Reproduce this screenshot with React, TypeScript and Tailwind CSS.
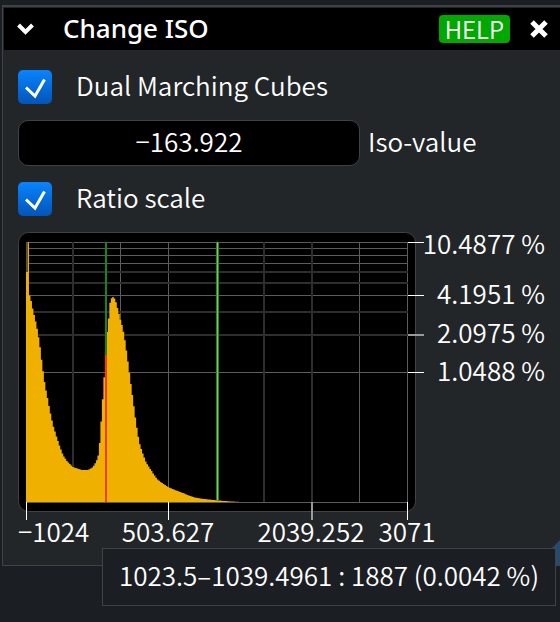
import React, { useId, useState } from 'react';

interface CheckRowProps {
    label: string;
}

interface Tick {
    pos: number;
    textPos: number;
    label: string;
    soft?: boolean;
    anchor?: 'start' | 'middle';
}

// Plot area inside the chart frame
const PLOT = { left: 8, top: 10, right: 389, bottom: 270 };
const BIN_COUNT = 256;

// Outline of the histogram, [x, y] in chart units
const OUTLINE: [number, number][] = [
    [8, 40], [9, 40], [9, 10], [10, 10], [11, 61], [13, 68], [15, 78], [18, 91], [20, 101], [22, 114],
    [24, 131], [27, 153], [30, 168], [32, 179], [35, 193], [39, 206], [42, 215], [45, 223], [49, 229],
    [52, 232], [55, 235], [58, 236], [64, 238], [70, 238], [75, 235], [78, 230], [80, 225], [81, 217],
    [82, 208], [83, 192], [84, 177], [85, 162], [86, 148], [87, 128], [89, 101], [91, 83], [92, 71],
    [94, 65], [96, 65], [98, 70], [100, 78], [102, 86], [104, 93], [106, 102], [108, 115], [110, 130],
    [112, 145], [114, 160], [116, 175], [118, 190], [120, 203], [122, 213], [125, 222], [128, 230],
    [131, 235], [135, 241], [139, 247], [144, 251], [150, 255], [157, 258], [165, 261], [172, 264],
    [179, 266], [187, 267], [196, 268], [206, 269], [223, 270], [389, 270],
];

const SHARP_ROWS = [10, 16, 23, 31, 63, 140, 270];
const SOFT_ROWS = [40, 51, 80, 103];
const SHARP_COLS = [102, 150, 341, 389];
const SOFT_COLS = [55, 246, 294];

const Y_TICKS: Tick[] = [
    { pos: 10, textPos: 22, label: '10.4877 %' },
    { pos: 63, textPos: 72, label: '4.1951 %' },
    { pos: 103, textPos: 111, label: '2.0975 %', soft: true },
    { pos: 140, textPos: 149, label: '1.0488 %' },
];

const X_TICKS: Tick[] = [
    { pos: 8, textPos: 0, label: '−1024', anchor: 'start' },
    { pos: 150, textPos: 150, label: '503.627', anchor: 'middle' },
    { pos: 294, textPos: 293, label: '2039.252', anchor: 'middle', soft: true },
    { pos: 389, textPos: 389, label: '3071', anchor: 'middle' },
];

const heightAt = (x: number) => {
    for (let i = 1; i < OUTLINE.length; i++) {
        const [x0, y0] = OUTLINE[i - 1];
        const [x1, y1] = OUTLINE[i];
        if (x <= x1 && x1 > x0) {
            return y0 + ((y1 - y0) * (x - x0)) / (x1 - x0);
        }
    }
    return PLOT.bottom;
};

const histogramPath = () => {
    const step = (PLOT.right - PLOT.left) / BIN_COUNT;
    let d = `M${PLOT.left} ${PLOT.bottom}`;
    for (let i = 0; i < BIN_COUNT; i++) {
        const x = PLOT.left + i * step;
        const y = i < 2 ? [40, 10][i] : heightAt(x + step / 2);
        d += `V${y.toFixed(1)}H${(x + step).toFixed(2)}`;
    }
    return `${d}V${PLOT.bottom}Z`;
};

const CheckRow: React.FC<CheckRowProps> = ({ label }) => {
    const id = useId();
    const [checked, setChecked] = useState(true);

    return (
        <div className="flex items-center gap-6">
            <span className="grid size-[34px]">
                <input
                    id={id}
                    type="checkbox"
                    checked={checked}
                    onChange={(e) => setChecked(e.target.checked)}
                    className="peer col-start-1 row-start-1 size-full appearance-none rounded-[5px] border border-[#3c4043] bg-black checked:border-0 checked:bg-linear-to-b checked:from-[#0a84ff] checked:to-[#0355b8]"
                />
                <svg
                    viewBox="0 0 34 34"
                    className="pointer-events-none invisible col-start-1 row-start-1 size-full peer-checked:visible"
                    fill="none"
                    stroke="#fff"
                    strokeWidth="3"
                >
                    <path d="M8 17.5 L17 26 L26.5 9.5" />
                </svg>
            </span>
            <label htmlFor={id} className="-mt-1">{label}</label>
        </div>
    );
};

const Histogram: React.FC = () => (
    <svg
        viewBox="0 0 542 317"
        width="542"
        height="317"
        className="block shrink-0 overflow-visible fill-white text-[26px]"
        role="img"
        aria-label="Histogram"
    >
        <rect x="0.5" y="0.5" width="397" height="279" rx="10" fill="#000" stroke="#3f4346" />

        {/* Grid */}
        <g fill="#5c5c5c" shapeRendering="crispEdges">
            {SHARP_ROWS.map((y) => (
                <rect key={y} x={PLOT.left} y={y} width="382" height="1" />
            ))}
            {SHARP_COLS.map((x) => (
                <rect key={x} x={x} y={PLOT.top} width="1" height="260" />
            ))}
        </g>
        <g fill="#2e2e2e" shapeRendering="crispEdges">
            {SOFT_ROWS.map((y) => (
                <rect key={y} x={PLOT.left} y={y - 1} width="382" height="2" />
            ))}
            {SOFT_COLS.map((x) => (
                <rect key={x} x={x - 1} y={PLOT.top} width="2" height="260" />
            ))}
        </g>

        <path d={histogramPath()} fill="#f0b000" />
        <rect x="8" y="10" width="2" height="30" fill="#6b5416" />

        {/* Current iso-value and hovered bin */}
        <rect x="87" y="10" width="2" height="113" fill="#14861f" />
        <rect x="87" y="123" width="2" height="147" fill="#f53a0c" />
        <rect x="198" y="10" width="3" height="258" fill="#2f7d26" />
        <rect x="199" y="10" width="1" height="258" fill="#74d05c" />

        {Y_TICKS.map(({ pos, textPos, label, soft }) => (
            <g key={label}>
                <rect x="390" y={soft ? pos - 1 : pos} width="16" height={soft ? 2 : 1} fill={soft ? '#999' : '#fff'} />
                <text x="527" y={textPos} textAnchor="end">{label}</text>
            </g>
        ))}
        {X_TICKS.map(({ pos, textPos, label, soft, anchor }) => (
            <g key={label}>
                <rect x={soft ? pos - 1 : pos} y="270" width={soft ? 2 : 1} height="18" fill={soft ? '#999' : '#fff'} />
                <text x={textPos} y="310" textAnchor={anchor}>{label}</text>
            </g>
        ))}
    </svg>
);

const App: React.FC = () => {
    const [isoValue, setIsoValue] = useState('−163.922');

    return (
        <div className="min-h-screen overflow-hidden bg-[#1b1e22] pt-[5px] pl-0.5 font-['Noto_Sans_CJK_SC',sans-serif] text-[26px] leading-8 font-[350] text-white">
            <section className="relative border-t-2 border-b border-l border-[#3f4347] bg-[#222628]">

                {/* Title bar */}
                <header className="ml-px mt-px flex h-[42px] items-center bg-black pr-[11px] pl-3">
                    <button type="button" aria-label="Collapse" className="mr-[27px] size-5">
                        <svg viewBox="0 0 20 20" className="size-5" fill="none" stroke="#fff" strokeWidth="4">
                            <path d="M2.5 6 L9.5 13 L16.5 6" strokeLinejoin="miter" />
                        </svg>
                    </button>
                    <h1 className="-mt-0.5 flex-1 font-['Noto_Sans',sans-serif] text-[26px] font-medium">Change ISO</h1>
                    <button type="button" className="flex h-7 items-center rounded-[4px] bg-[#00a800] px-1.5 text-2xl">
                        HELP
                    </button>
                    <button type="button" aria-label="Close" className="ml-[19px] size-5">
                        <svg viewBox="0 0 20 20" className="size-5" fill="none" stroke="#fff" strokeWidth="5">
                            <path d="M3 3 L17 17 M17 3 L3 17" />
                        </svg>
                    </button>
                </header>

                <div className="flex flex-col gap-4 pt-5 pb-4 pl-[15px]">
                    <CheckRow label="Dual Marching Cubes" />
                    <div className="flex items-center gap-2">
                        <input
                            id="iso-value"
                            type="text"
                            value={isoValue}
                            onChange={(e) => setIsoValue(e.target.value)}
                            className="h-[46px] w-[342px] rounded-[10px] border border-[#3f4346] bg-black pb-1.5 text-center"
                        />
                        <label htmlFor="iso-value" className="-mt-1">Iso-value</label>
                    </div>
                    <CheckRow label="Ratio scale" />
                    <Histogram />
                </div>

                {/* Resize grip */}
                <div className="absolute right-0 bottom-0 h-[25px] w-[25px] bg-[#294a6b] [clip-path:polygon(100%_0,100%_100%,0_100%)]" />

                <div role="tooltip" className="absolute right-1 -bottom-[41px] border border-[#3f4347] bg-[#1b1e22] px-4 pt-2.5 pb-3.5 whitespace-nowrap">
                    1023.5–1039.4961 : 1887 (0.0042 %)
                </div>
            </section>
        </div>
    );
};

export default App;
